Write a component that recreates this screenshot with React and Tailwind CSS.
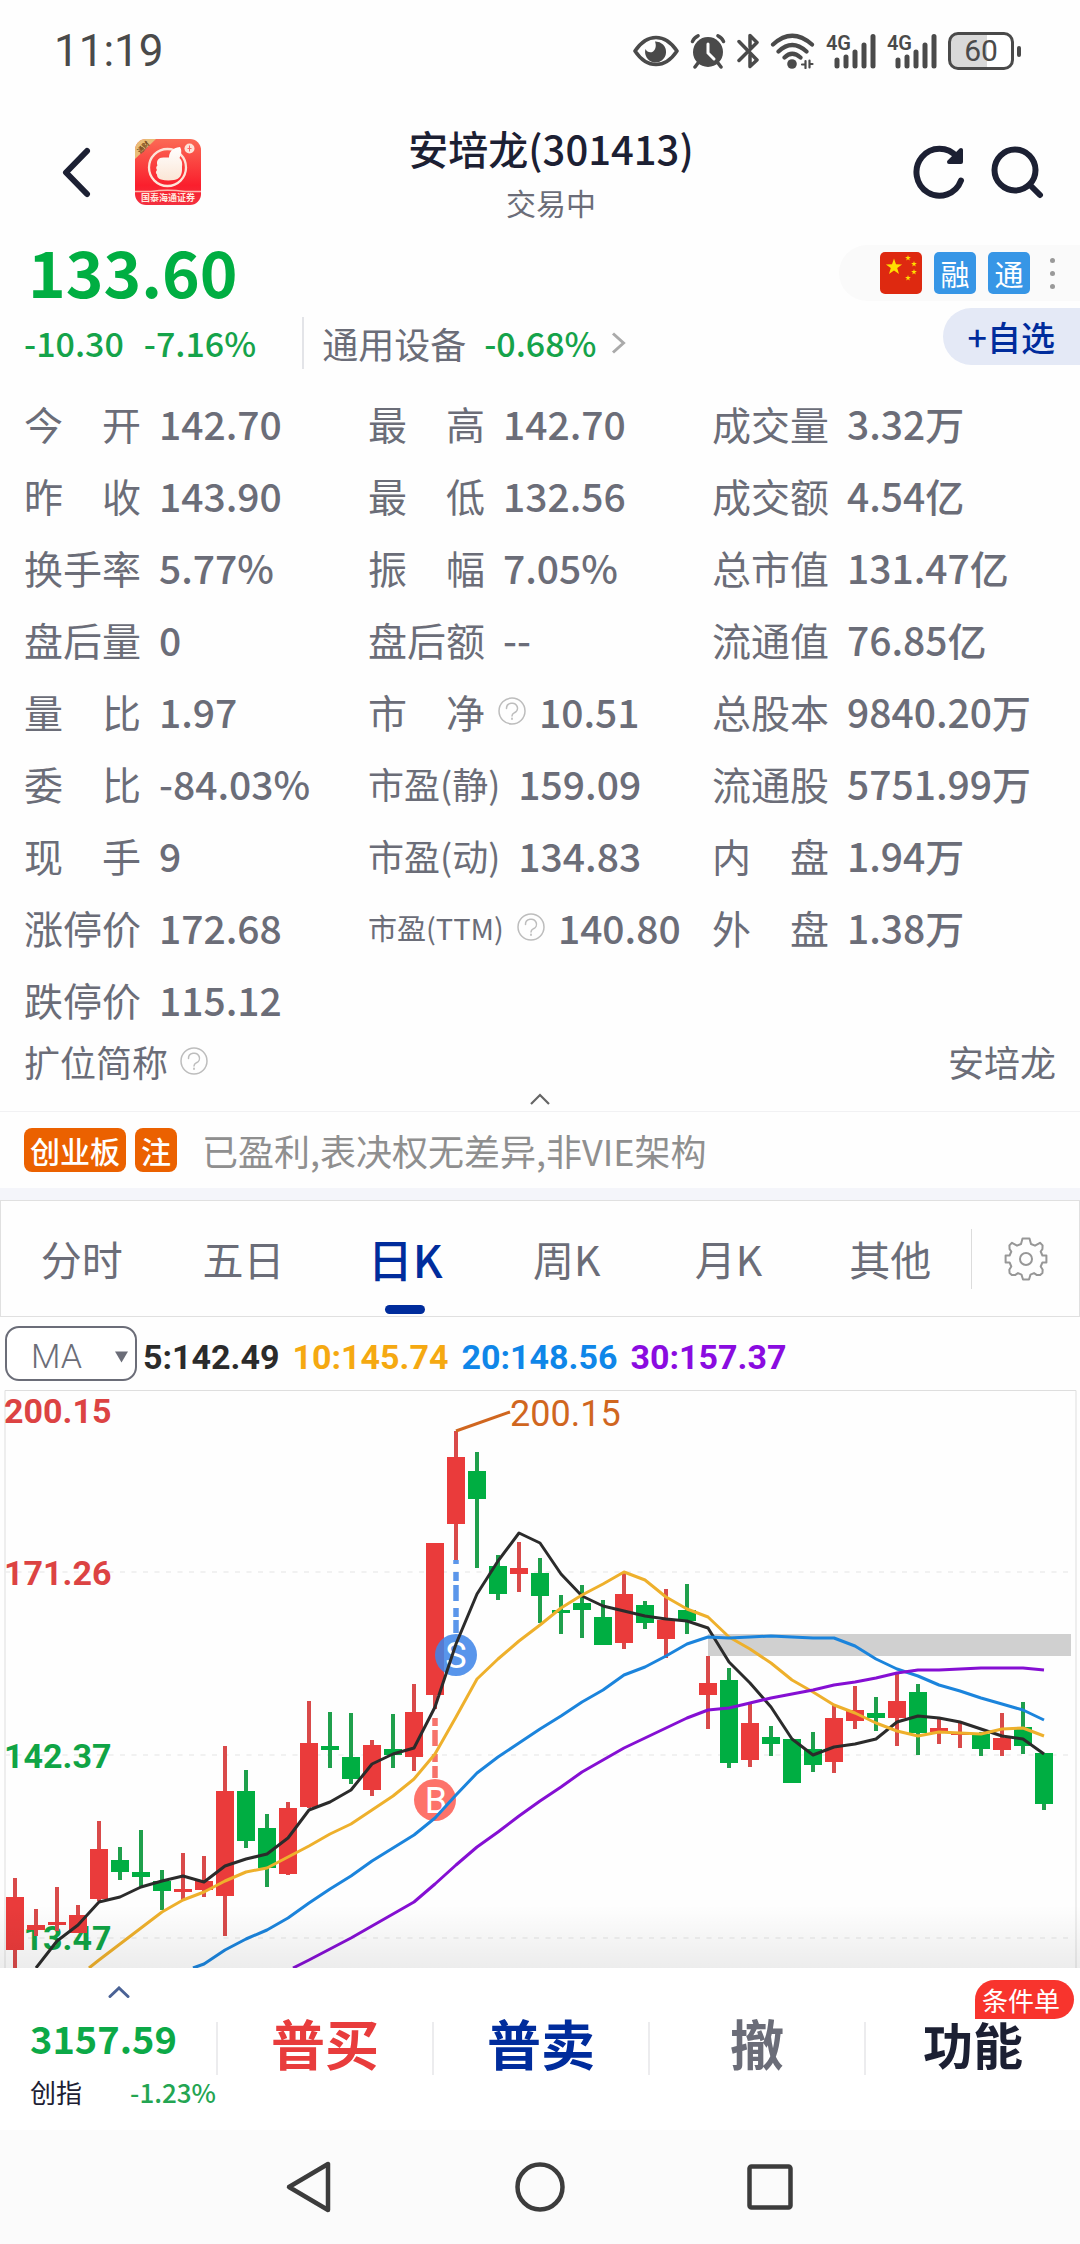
import React from "react";

const QUOTE_ROWS = [
  [["今 开", "142.70"], ["最 高", "142.70"], ["成交量", "3.32万"]],
  [["昨 收", "143.90"], ["最 低", "132.56"], ["成交额", "4.54亿"]],
  [["换手率", "5.77%"], ["振 幅", "7.05%"], ["总市值", "131.47亿"]],
  [["盘后量", "0"], ["盘后额", "--"], ["流通值", "76.85亿"]],
  [["量 比", "1.97"], ["市 净", "10.51", { help: true }], ["总股本", "9840.20万"]],
  [["委 比", "-84.03%"], ["市盈(静)", "159.09", { size: "md" }], ["流通股", "5751.99万"]],
  [["现 手", "9"], ["市盈(动)", "134.83", { size: "md" }], ["内 盘", "1.94万"]],
  [["涨停价", "172.68"], ["市盈(TTM)", "140.80", { size: "sm", help: true }], ["外 盘", "1.38万"]],
  [["跌停价", "115.12"]],
];

const TABS = ["分时", "五日", "日K", "周K", "月K", "其他"];

/* colour, high, body top, body bottom, low — in chart units */
const CANDLES = [
  ["r", 488, 507, 560, 578], ["r", 519, 535, 540, 546], ["r", 497, 532, 535, 541], ["r", 515, 525, 543, 543],
  ["r", 431, 459, 509, 511], ["g", 457, 470, 482, 490], ["g", 440, 482, 487, 498], ["g", 480, 491, 501, 520],
  ["r", 463, 499, 502, 510], ["r", 466, 491, 500, 507], ["r", 356, 401, 506, 546], ["g", 380, 401, 451, 458],
  ["g", 424, 438, 478, 497], ["r", 412, 418, 484, 485], ["r", 311, 353, 417, 418], ["g", 322, 356, 360, 378],
  ["g", 323, 367, 389, 394], ["r", 350, 355, 400, 406], ["g", 324, 359, 365, 378], ["r", 294, 322, 367, 381],
  ["r", 153, 153, 305, 319], ["r", 41, 67, 134, 170], ["g", 62, 81, 109, 178], ["g", 165, 176, 204, 210],
  ["r", 152, 178, 184, 202], ["g", 168, 183, 206, 233], ["g", 205, 220, 223, 244], ["g", 195, 213, 220, 248],
  ["g", 210, 227, 255, 255], ["r", 183, 204, 253, 259], ["g", 211, 215, 233, 239], ["r", 199, 230, 249, 268],
  ["g", 194, 220, 231, 244], ["r", 266, 293, 305, 339], ["g", 278, 290, 373, 378], ["r", 312, 333, 370, 377],
  ["g", 336, 347, 354, 366], ["g", 349, 349, 393, 393], ["g", 342, 359, 375, 382], ["r", 314, 328, 372, 383],
  ["r", 296, 320, 331, 339], ["g", 307, 323, 328, 341], ["r", 283, 311, 328, 356], ["g", 294, 302, 343, 365],
  ["r", 329, 338, 342, 354], ["r", 331, 343, 345, 358], ["g", 342, 344, 359, 366], ["r", 323, 348, 360, 366],
  ["g", 312, 337, 356, 364], ["g", 363, 363, 414, 420],
];

const MA5 = { start: [36, 578], from: 2, ys: [551, 535, 512, 507, 497, 491, 486, 492, 476, 469, 464, 448, 420, 412, 400, 374, 364, 358, 317, 254, 204, 171, 143, 153, 184, 206, 216, 221, 226, 229, 231, 238, 272, 293, 317, 349, 365, 357, 354, 349, 332, 326, 328, 332, 339, 346, 349, 364] };
const MA10 = { start: [89, 578], from: 4, ys: [570, 554, 538, 522, 510, 502, 491, 482, 478, 467, 456, 444, 434, 420, 406, 389, 364, 327, 289, 269, 251, 235, 218, 205, 194, 182, 190, 207, 219, 227, 247, 259, 273, 290, 302, 315, 323, 333, 341, 346, 342, 343, 344, 339, 338, 346] };
const MA20 = { start: [193, 578], from: 9, ys: [574, 560, 549, 540, 528, 513, 499, 486, 471, 458, 445, 428, 405, 383, 367, 353, 339, 326, 312, 300, 285, 277, 266, 254, 247, 248, 247, 246, 247, 248, 248, 256, 269, 279, 286, 295, 301, 308, 314, 320, 330] };
const MA30 = { start: [293, 578], from: 14, ys: [570, 559, 548, 536, 524, 512, 494, 475, 457, 442, 426, 411, 397, 382, 370, 358, 348, 338, 328, 320, 318, 313, 308, 304, 300, 295, 292, 288, 283, 280, 280, 279, 278, 278, 278, 280] };

const candleX = (i) => 15 + 21 * i;
const linePoints = ({ start, from, ys }) =>
  [start, ...ys.map((y, k) => [candleX(from + k), y])].map((p) => p.join(",")).join(" ");

function HelpIcon() {
  return (
    <svg className="h-7 w-7 shrink-0" viewBox="0 0 28 28" fill="none" stroke="#bdbdbd" strokeWidth="1.5" strokeLinecap="round">
      <circle cx="14" cy="14" r="13" />
      <path d="M8.5 11.5a5.5 5 0 1 1 8 4.2c-1.7.9-2.5 1.5-2.500 3.300" />
      <path d="M14 21.400v.6" strokeWidth="1.8" />
    </svg>
  );
}

function SignalIcon() {
  return (
    <div className="flex h-9 items-end">
      <span className="-mr-5 self-start font-['Roboto',sans-serif] text-[20px] leading-[20px] font-semibold">4G</span>
      <svg className="h-9 w-[45px]" viewBox="0 0 45 36" stroke="#4a4a4a" strokeWidth="5" strokeLinecap="round">
        <path d="M6 27v6M15 24v9M24 19v14M33 12v21M42 3.500v29.500" />
      </svg>
    </div>
  );
}

function StatusBar() {
  return (
    <div className="flex h-[102px] items-center justify-between pr-[59px] pl-[54px] text-[#4a4a4a]">
      <span className="font-['Roboto',sans-serif] text-[44px] leading-[60px]">11:19</span>
      <div className="flex items-center gap-[11px]">
        <svg className="h-8 w-[46px]" viewBox="0 0 46 32" fill="none">
          <path d="M2 16C8 7 15 2.500 23 2.500S38 7 44 16C38 25 31 29.500 23 29.500S8 25 2 16Z" stroke="#4a4a4a" strokeWidth="3.6" strokeLinejoin="round" />
          <path d="M22 6.500a10.500 10.500 0 1 1-9.500 7.500c1.500 3.200 5 4.200 7.600 2.400 2.900-2.100 3.300-6.100 1.900-9.900Z" fill="#4a4a4a" />
        </svg>
        <svg className="h-9 w-9" viewBox="0 0 36 36" fill="none" stroke="#4a4a4a" strokeWidth="3.5" strokeLinecap="round">
          <circle cx="18" cy="19" r="15" fill="#4a4a4a" stroke="none" />
          <path d="M2.500 8.500Q4 4.500 8 2.800M33.500 8.500Q32 4.500 28 2.800M8 30l-3 4M28 30l3 4" />
          <path d="M18 11v9l6 6" stroke="#fff" strokeWidth="3" />
        </svg>
        <svg className="h-9 w-[22px]" viewBox="0 0 22 36" fill="none" stroke="#4a4a4a" strokeWidth="3.5" strokeLinejoin="round" strokeLinecap="round">
          <path d="M2 8.500 20 27 13 33.500V22M2 27.500 20 9.500 13 2.500V14" />
        </svg>
        <svg className="h-9 w-[45px]" viewBox="0 0 45 36" fill="none" stroke="#4a4a4a" strokeWidth="4.2" strokeLinecap="round">
          <path d="M3 11.500Q22 -6 42 11.500M8.500 18.500Q22 5.500 36.500 18.500M14.500 24.500Q22 17 30.500 24.500" />
          <circle cx="22" cy="31" r="4.8" fill="#4a4a4a" stroke="none" />
          <path d="M32 31.500h3.500v-3.500M35.500 28v7M39.500 27.500v7M39.500 31h3" strokeWidth="2.2" />
        </svg>
        <SignalIcon />
        <SignalIcon />
        <div className="flex items-center gap-[3px]">
          <div className="flex h-[38px] w-[66px] items-center justify-center rounded-[10px] border-[3px] border-[#4a4a4a] bg-linear-to-r from-[#d9d9d9] from-60% to-white to-60% font-['Roboto',sans-serif] text-[30px] leading-none">60</div>
          <div className="h-[11px] w-1 rounded-full bg-[#4a4a4a]" />
        </div>
      </div>
    </div>
  );
}

function BrokerLogo() {
  return (
    <svg className="h-[66px] w-[66px]" viewBox="0 0 66 66" role="img" aria-label="国泰海通证券">
      <defs>
        <linearGradient id="brand" x1="0" y1="0" x2="0" y2="1">
          <stop offset="0" stopColor="#fb6a55" /><stop offset=".7" stopColor="#fa1f2d" /><stop offset="1" stopColor="#f33040" />
        </linearGradient>
        <linearGradient id="hand" x1="0" y1="0" x2="0" y2="1">
          <stop offset="0" stopColor="#fff" /><stop offset="1" stopColor="#fbe6d6" />
        </linearGradient>
        <clipPath id="tile"><rect width="66" height="66" rx="11" /></clipPath>
      </defs>
      <g clipPath="url(#tile)">
        <rect width="66" height="66" fill="url(#brand)" />
        <path d="M0 0h21L0 20Z" fill="#e9bd78" />
        <circle cx="32.5" cy="28.5" r="18.5" fill="none" stroke="#fde4d8" strokeWidth="2.3" />
        <path d="M45 8c2 3 1.500 7-.5 11 2.500 2 3 5 2.500 9 .5 8-2 12-8 13-5 .7-9 .5-13-.5-3-1-4-2.500-4-5-1.500-1.500-1.500-3 0-4.500-1.200-1.800-1-3.500.4-4.600-1.200-3.600.2-7 4-7.600 3-.6 5-.3 7.600-.3 0-5 3-9.500 11-10.500Z" fill="url(#hand)" />
        <circle cx="54.5" cy="9.5" r="5" fill="#fde4d8" /><path d="M54.500 6.500v6M52.500 9.500h4" stroke="#f66" strokeWidth="1" />
        <path d="M0 52.500h16q16-2.500 34 0h16" fill="none" stroke="#ffb9ae" strokeWidth="1.3" />
      </g>
      <text x="8" y="11" textAnchor="middle" fontSize="7" fontWeight="700" fill="#7a4a1c" transform="rotate(-45 8 8)" fontFamily="'Noto Sans CJK SC', sans-serif">通财</text>
      <text x="33" y="62" textAnchor="middle" fontSize="9" fontWeight="700" fill="#ffe9df" fontFamily="'Noto Sans CJK SC', sans-serif">国泰海通证券</text>
    </svg>
  );
}

function Header() {
  return (
    <header className="grid h-[140px] grid-cols-[1fr_auto_1fr] items-center pr-[36px] pl-[58px]">
      <div className="flex items-center gap-[40px]">
        <button type="button" aria-label="返回">
          <svg className="h-[52px] w-[37px]" viewBox="0 0 37 52" fill="none" stroke="#1c2033" strokeWidth="6" strokeLinecap="round" strokeLinejoin="round"><path d="M29 5 8 26.500 29 48" /></svg>
        </button>
        <BrokerLogo />
      </div>
      <div className="text-center">
        <h1 className="text-[40px] leading-[60px] font-medium text-[#1c2033]">安培龙(301413)</h1>
        <p className="text-[30px] leading-[48px] text-[#6b6d78]">交易中</p>
      </div>
      <div className="flex items-center justify-end gap-[22px]">
        <button type="button" aria-label="刷新">
          <svg className="h-[56px] w-[56px]" viewBox="0 0 56 56" fill="none" stroke="#1c2033" strokeWidth="6" strokeLinecap="round" strokeLinejoin="round">
            <path d="M49 36.500A23 23.500 0 1 1 45 13" /><path d="M49 6v12H37Z" fill="#1c2033" strokeWidth="4" />
          </svg>
        </button>
        <button type="button" aria-label="搜索">
          <svg className="h-[54px] w-[54px]" viewBox="0 0 54 54" fill="none" stroke="#1c2033" strokeWidth="6" strokeLinecap="round">
            <circle cx="25" cy="25" r="20.5" /><path d="m40 40 10 10" />
          </svg>
        </button>
      </div>
    </header>
  );
}

function FlagIcon() {
  const star = (cx, cy, r) =>
    Array.from({ length: 10 }, (_, k) => {
      const a = (Math.PI / 5) * k - Math.PI / 2;
      const d = k % 2 ? r * 0.4 : r;
      return `${(cx + d * Math.cos(a)).toFixed(1)},${(cy + d * Math.sin(a)).toFixed(1)}`;
    }).join(" ");
  return (
    <svg className="h-[42px] w-[42px]" viewBox="0 0 42 42" role="img" aria-label="中国">
      <rect width="42" height="42" rx="5" fill="#de2910" />
      <g fill="#ffde00">
        <polygon points={star(14, 15, 8.5)} />
        <polygon points={star(28, 6, 3)} /><polygon points={star(34, 12, 3)} />
        <polygon points={star(34, 20, 3)} /><polygon points={star(28, 26, 3)} />
      </g>
    </svg>
  );
}

function PriceSummary() {
  return (
    <section className="flex justify-between">
      <div className="pl-6 text-[#15a34a]">
        <div className="pl-1 text-[64px] leading-[56px] font-bold text-[#00ae42]">133.60</div>
        <div className="flex h-[89px] items-center text-[34px] font-medium">
          <span>-10.30</span>
          <span className="ml-5">-7.16%</span>
          <a href="#sector" className="ml-[46px] flex h-[52px] items-center border-l-2 border-[#e3e4e8] pl-[18px]">
            <span className="text-[36px] font-normal text-[#6b6d78]">通用设备</span>
            <span className="ml-[18px]">-0.68%</span>
            <svg className="ml-[14px] h-[22px] w-4" viewBox="0 0 16 22" fill="none" stroke="#aaa" strokeWidth="3"><path d="m2 1.500 10.500 9.500L2 20.500" /></svg>
          </a>
        </div>
      </div>
      <div className="flex flex-col items-end pt-[3px]">
        <div className="flex h-14 items-center gap-3 rounded-l-full bg-[#fafafa] pr-[25px] pl-[41px]">
          <FlagIcon />
          {["融", "通"].map((t) => (
            <span key={t} className="flex h-[42px] w-[42px] items-center justify-center rounded-[5px] bg-[#3796e6] text-[29px] leading-none text-white">{t}</span>
          ))}
          <button type="button" aria-label="更多" className="ml-2 flex flex-col gap-2">
            <i className="h-[5px] w-[5px] rounded-full bg-[#999]" /><i className="h-[5px] w-[5px] rounded-full bg-[#999]" /><i className="h-[5px] w-[5px] rounded-full bg-[#999]" />
          </button>
        </div>
        <button type="button" className="mt-[7px] flex h-[57px] items-center rounded-l-full bg-[#e4e9f6] px-[25px] text-[34px] font-medium text-[#002c9c]">+自选</button>
      </div>
    </section>
  );
}

const LABEL_SIZE = {
  lg: "flex w-[117px] justify-between text-[39px]",
  md: "text-[36px]",
  sm: "text-[29px]",
};

function QuoteCell({ label, value, size = "lg", help = false }) {
  return (
    <div className={`flex items-center ${help ? "gap-[13px]" : "gap-[18px]"}`}>
      <dt className={LABEL_SIZE[size]}>
        {size === "lg" ? label.split(" ").map((part) => <span key={part}>{part}</span>) : label}
      </dt>
      {help && <HelpIcon />}
      <dd className="text-[39px] font-medium">{value}</dd>
    </div>
  );
}

function QuoteTable() {
  return (
    <section className="text-[#6b6d78]">
      <dl className="grid auto-rows-[72px] grid-cols-3 px-6 leading-[72px] whitespace-nowrap">
        {QUOTE_ROWS.flat().map(([label, value, opts]) => (
          <QuoteCell key={label} label={label} value={value} {...opts} />
        ))}
      </dl>
      <div className="flex h-[52px] items-center justify-between px-6 text-[36px]">
        <span className="flex items-center gap-3">扩位简称 <HelpIcon /></span>
        <span>安培龙</span>
      </div>
      <button type="button" aria-label="收起" className="flex h-6 w-full items-center justify-center">
        <svg className="h-3 w-5" viewBox="0 0 20 12" fill="none" stroke="#666" strokeWidth="2.2"><path d="m1 11 9-9 9 9" /></svg>
      </button>
    </section>
  );
}

function BoardNote() {
  return (
    <section className="flex h-[77px] items-center border-t border-[#f1f1f3] pl-6">
      <span className="flex h-11 items-center rounded-lg bg-[#eb6100] px-[6px] text-[30px] font-medium text-white">创业板</span>
      <span className="ml-[9px] flex h-11 items-center rounded-lg bg-[#eb6100] px-[6px] text-[30px] font-medium text-white">注</span>
      <p className="ml-[25px] text-[36px] text-[#8f8f8f]">已盈利,表决权无差异,非VIE架构</p>
    </section>
  );
}

function ChartTabs() {
  return (
    <nav className="border-t-12 border-[#f4f5fa]">
      <div className="flex h-[117px] items-center border border-[#e0e0e0]">
        <div className="grid h-full flex-1 grid-cols-6">
          {TABS.map((t) =>
            t === "日K" ? (
              <button key={t} type="button" aria-current="true" className="relative text-[45px] font-medium text-[#002c9c]">
                {t}
                <span className="absolute bottom-[2px] left-1/2 h-[9px] w-10 -translate-x-1/2 rounded-full bg-[#002c9c]" />
              </button>
            ) : (
              <button key={t} type="button" className="text-[41px] text-[#6b6d78]">{t}</button>
            )
          )}
        </div>
        <button type="button" aria-label="设置" className="flex h-[60px] w-[108px] items-center justify-center border-l border-[#dcdcdc]">
          <svg className="h-[44px] w-[44px]" viewBox="0 0 44 44" fill="none" stroke="#979797" strokeWidth="2" strokeLinejoin="round">
            <path d="M18.500 1.500h7l1.500 5.500 4 1.700 5-2.900 2.600 2.600-.2 3.800-1.700 2.300 1.700 4h4v7h-4l-1.700 4 2 3.200-.3 3.400-2.200 2-3.600-.2-2.600-1.800-3.500 1.500-1.500 4.900h-6l-1.500-4.900-3.500-1.500-2.600 1.800-3.600.2-2.200-2-.3-3.400 2-3.200-1.700-4h-4v-7h4l1.700-4-1.700-2.300-.2-3.800L8 5.800l5 2.900 4-1.700Z" />
            <circle cx="22" cy="22" r="6" />
          </svg>
        </button>
      </div>
    </nav>
  );
}

function IndicatorBar() {
  return (
    <div className="flex h-[73px] items-center pl-[5px] font-['Roboto',sans-serif] text-[34px] font-bold">
      <label className="relative">
        <span className="sr-only">指标</span>
        <select className="block h-[55px] w-[132px] appearance-none rounded-[14px] border-2 border-[#6b6d78] bg-white pt-1 pl-[24px] leading-[44px] font-light text-[#6b6d78]" defaultValue="MA">
          <option>MA</option>
        </select>
        <svg className="pointer-events-none absolute top-[25px] right-[9px] h-3 w-[13px]" viewBox="0 0 14 12"><path d="M0 0h14L7 12Z" fill="#6b6d78" /></svg>
      </label>
      <div className="ml-[6px] flex gap-[13px] pt-2">
        <span className="text-[#2b2b2b]">5:142.49</span>
        <span className="text-[#f5a911]">10:145.74</span>
        <span className="text-[#0f86e8]">20:148.56</span>
        <span className="text-[#8a0be0]">30:157.37</span>
      </div>
    </div>
  );
}

function CandleChart() {
  return (
    <svg className="block h-auto w-full" viewBox="0 0 1080 578" role="img" aria-label="日K线">
      <defs>
        <linearGradient id="shade" x1="0" y1="0" x2="0" y2="1">
          <stop offset="0" stopColor="#000" stopOpacity="0" /><stop offset="1" stopColor="#000" stopOpacity=".07" />
        </linearGradient>
      </defs>
      <path d="M5 578V.5H1076V578" fill="none" stroke="#dedede" />
      <g stroke="#ededed" strokeWidth="1.5" strokeDasharray="5 6.5">
        <path d="M5 182H1071M5 365H1071M5 548H1071" />
      </g>
      <g fontFamily="Roboto, sans-serif" fontSize="34" fontWeight="700">
        <text x="4" y="33" fill="#dc4343">200.15</text>
        <text x="4" y="195" fill="#dc4343">171.26</text>
        <text x="4" y="378" fill="#10a445">142.37</text>
        <text x="4" y="560" fill="#10a445">113.47</text>
      </g>
      <rect x="708" y="244" width="363" height="22" fill="#d0d0d0" />
      {CANDLES.map(([c, hi, top, bot, lo], i) => (
        <g key={i}>
          <path d={`M${candleX(i)} ${hi}V${lo}`} stroke={c === "r" ? "#d94a4a" : "#1fa04c"} strokeWidth="4" />
          <rect x={candleX(i) - 9} y={top} width="18" height={Math.max(bot - top, 1)} fill={c === "r" ? "#ea3b3b" : "#00ae42"} />
        </g>
      ))}
      <path d="M456 170v4M456 182v9M456 195v16M456 218v9M456 230v13" stroke="#5b96ea" strokeWidth="5.5" />
      <path d="M435 328v8M435 340v16M435 364v8M435 376v12" stroke="#f6736b" strokeWidth="5.5" />
      <circle cx="456" cy="265" r="21" fill="#3f85e8" fillOpacity=".87" />
      <circle cx="435" cy="410" r="21" fill="#fd6b62" fillOpacity=".95" />
      <g fontFamily="Roboto, sans-serif" fontSize="36" textAnchor="middle" fill="#fff">
        <text x="456" y="278">S</text>
        <text x="436" y="423">B</text>
      </g>
      <g fill="none" strokeWidth="3" strokeLinejoin="round">
        <polyline points={linePoints(MA5)} stroke="#2b2b2b" />
        <polyline points={linePoints(MA10)} stroke="#eeb02c" />
        <polyline points={linePoints(MA20)} stroke="#1b84dc" />
        <polyline points={linePoints(MA30)} stroke="#850fd3" />
        <path d="M456 41 510 22" stroke="#d0661f" />
      </g>
      <text x="510" y="36" fill="#d0661f" fontFamily="Roboto, sans-serif" fontSize="36">200.15</text>
      <rect y="515" width="1080" height="63" fill="url(#shade)" />
    </svg>
  );
}

function TradeBar() {
  const action = "mt-[54px] flex h-[53px] items-center justify-center border-l-2 border-[#ececee] pb-3 text-[54px] leading-none font-bold";
  return (
    <footer className="grid h-[162px] grid-cols-5 bg-white">
      <a href="#index" className="block pl-[30px]">
        <svg className="mt-[18px] ml-[78px] h-3 w-[22px]" viewBox="0 0 22 12" fill="none" stroke="#4a6295" strokeWidth="3" strokeLinecap="round"><path d="m2 10.500 9-8.500 9 8.500" /></svg>
        <div className="mt-3 text-[38px] leading-[56px] font-bold text-[#0ca947]">3157.59</div>
        <div className="flex justify-between text-[26px] leading-[52px]">
          <span className="text-[#1c2033]">创指</span>
          <span className="font-medium text-[#23a552]">-1.23%</span>
        </div>
      </a>
      <button type="button" className={`${action} text-[#e83c3c]`}>普买</button>
      <button type="button" className={`${action} text-[#002c9c]`}>普卖</button>
      <button type="button" className={`${action} text-[#6b6d78]`}>撤</button>
      <div className="relative">
        <button type="button" className="mt-[54px] flex h-[53px] w-full items-center justify-center border-l-2 border-[#ececee] pb-3 text-[50px] leading-none font-bold text-[#1c2033]">功能</button>
        <span className="absolute top-3 right-[6px] flex h-[39px] items-center rounded-full rounded-bl-none bg-[#f8342d] pr-[14px] pl-[7px] text-[26px] leading-[30px] text-white">条件单</span>
      </div>
    </footer>
  );
}

function SystemNav() {
  return (
    <nav className="flex h-[114px] items-center justify-center gap-[176px] bg-[#fbfbfb]">
      <button type="button" aria-label="后退">
        <svg className="h-[54px] w-[54px]" viewBox="0 0 54 54" fill="none" stroke="#3c3c3c" strokeWidth="4.5" strokeLinejoin="round"><path d="M45 4v46L6 27Z" /></svg>
      </button>
      <button type="button" aria-label="主页">
        <svg className="h-[54px] w-[54px]" viewBox="0 0 54 54" fill="none" stroke="#3c3c3c" strokeWidth="4.5"><circle cx="27" cy="27" r="22.5" /></svg>
      </button>
      <button type="button" aria-label="最近任务">
        <svg className="h-[54px] w-[54px]" viewBox="0 0 54 54" fill="none" stroke="#3c3c3c" strokeWidth="4.5"><rect x="6.5" y="6.5" width="41" height="41" rx="2" /></svg>
      </button>
    </nav>
  );
}

export default function App() {
  return (
    <div className="min-h-screen w-full bg-[#fefefe] font-['Noto_Sans_CJK_SC',sans-serif]">
      <StatusBar />
      <Header />
      <PriceSummary />
      <QuoteTable />
      <BoardNote />
      <ChartTabs />
      <IndicatorBar />
      <CandleChart />
      <TradeBar />
      <SystemNav />
    </div>
  );
}
